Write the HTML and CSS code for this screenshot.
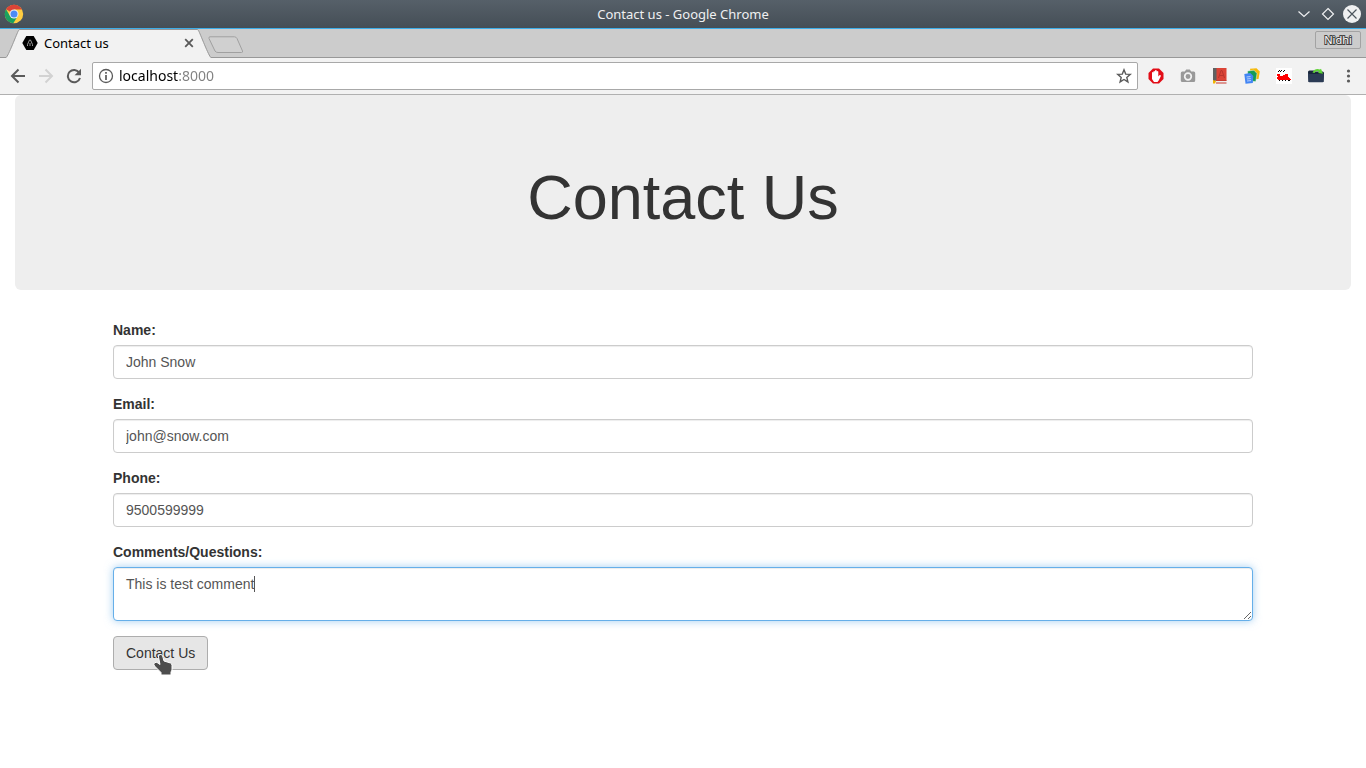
FILE: index.html
```html
<!DOCTYPE html>
<html lang="en">
<head>
<meta charset="utf-8">
<meta name="viewport" content="width=device-width, initial-scale=1">
<title>Contact us</title>
<link rel="stylesheet" href="styles.css">
</head>
<body>
<header class="titlebar">
  <svg class="app-icon" width="20" height="20" viewBox="0 0 20 20" aria-hidden="true">
    <circle cx="10" cy="10" r="9.2" fill="#ffcd41"/>
    <path d="M10 10 2 5.3A9.2 9.2 0 0 1 18 5.5H10Z" fill="#dc4437"/>
    <path d="M2 5.3A9.2 9.2 0 0 0 9.3 19.2L13.8 12 10 10 6.2 12.3Z" fill="#1aa15f"/>
    <circle cx="10" cy="10" r="4.5" fill="#f1f1f1"/>
    <circle cx="10" cy="10" r="3.5" fill="#4c8bf5"/>
  </svg>
  <span class="window-title">Contact us - Google Chrome</span>
  <div class="window-controls">
    <button class="window-button" type="button" aria-label="Minimize"><svg width="20" height="20" viewBox="0 0 20 20"><path d="m4.500 7.500 5.500 5 5.500-5" fill="none" stroke="#eff0f1" stroke-width="1.2"/></svg></button>
    <button class="window-button" type="button" aria-label="Maximize"><svg width="20" height="20" viewBox="0 0 20 20"><path d="m10 4.500 5.500 5.500-5.500 5.500L4.500 10Z" fill="none" stroke="#eff0f1" stroke-width="1.2"/></svg></button>
    <button class="window-button" type="button" aria-label="Close"><svg width="20" height="20" viewBox="0 0 20 20"><circle cx="10" cy="10" r="9" fill="#eff0f1"/><path d="m5.500 5.500 9 9m0-9-9 9" stroke="#4d565e" stroke-width="1.2"/></svg></button>
  </div>
</header>

<div class="tabstrip">
  <div class="tab">
    <svg class="tab-shape" width="206" height="29" viewBox="0 0 206 29" aria-hidden="true"><path d="M0 28.500C2 28 11 4 12.500 1.500Q13 .5 14 .5H191Q192 .5 192.500 1.500C194 4 203 28 205 28.500V29H0Z" fill="#f2f2f2"/><path d="M0 28.500C2 28 11 4 12.500 1.500Q13 .5 14 .5H191Q192 .5 192.500 1.500C194 4 203 28 205 28.500" fill="none" stroke="#989898"/></svg>
    <svg class="tab-icon" width="16" height="16" viewBox="0 0 16 16" aria-hidden="true"><path d="M4.300 1h7.400L15.700 8l-4 7H4.300L.3 8Z" fill="#000"/><path d="M5.500 11V9.500L7.500 5h1l2 4.500V11M8 8v3" fill="none" stroke="#999" stroke-width="1"/></svg>
    <span class="tab-title">Contact us</span>
    <button class="tab-close" type="button" aria-label="Close tab"><svg width="10" height="10" viewBox="0 0 10 10"><path d="m1.200 1.200 7.600 7.600m0-7.600L1.200 8.800" stroke="#5a5a5a" stroke-width="1.800"/></svg></button>
  </div>
  <button class="new-tab" type="button" aria-label="New tab"><svg width="36" height="18" viewBox="0 0 36 18"><path d="M2 .8h24.500Q28 .8 29 2.500L34.500 15Q35 16.500 33.500 16.500H10Q8 16.500 7 15L1 2.500Q.5.8 2 .8Z" fill="#d0d0d0" stroke="#a0a0a0"/></svg></button>
  <button class="profile" type="button">Nidhi</button>
</div>

<nav class="toolbar" aria-label="Browser">
  <button class="tool" type="button" aria-label="Back"><svg width="16" height="16" viewBox="0 0 16 16"><path d="M15 8H2.500M8.500 1.500 2 8l6.500 6.500" fill="none" stroke="#5a5a5a" stroke-width="2"/></svg></button>
  <button class="tool" type="button" aria-label="Forward" disabled><svg width="16" height="16" viewBox="0 0 16 16"><path d="M1 8h12.500M7.500 1.500 14 8l-6.500 6.500" fill="none" stroke="#d2d2d2" stroke-width="2"/></svg></button>
  <button class="tool" type="button" aria-label="Reload"><svg width="16" height="16" viewBox="0 0 16 16"><path d="M13.200 4.600A6.200 6.200 0 1 0 14 10" fill="none" stroke="#5a5a5a" stroke-width="2"/><path d="M15 .8v6.400H8.600Z" fill="#5a5a5a"/></svg></button>
  <div class="address">
    <svg width="16" height="16" viewBox="0 0 16 16" aria-hidden="true"><circle cx="8" cy="8" r="6.500" fill="none" stroke="#5a5a5a" stroke-width="1.300"/><path d="M8 7v5M8 4v1.700" stroke="#5a5a5a" stroke-width="1.700"/></svg>
    <input class="address-input" type="text" value="localhost:8000" aria-label="Address" spellcheck="false">
    <button class="star" type="button" aria-label="Bookmark this page"><svg width="16" height="16" viewBox="0 0 16 16"><path d="m8 1.800 1.700 4.300 4.600.3-3.500 3 1.100 4.500L8 11.500l-3.900 2.400 1.100-4.500-3.500-3 4.600-.3Z" fill="none" stroke="#5a5a5a" stroke-width="1.400"/></svg></button>
  </div>
  <div class="extensions">
    <button class="tool" type="button" aria-label="Ad blocker"><svg width="16" height="16" viewBox="0 0 16 16"><path d="M5 .5h6L15.500 5v6L11 15.500H5L.5 11V5Z" fill="#e20d17"/><path d="M4 4.500q.7-.8 1.400 0V3.500q.8-.9 1.600 0v-1q.9-.8 1.700 0v1q.8-.8 1.600 0V8.500l1.400-1.500q1.400 0 1.200.9L10.700 12.500 9.500 14H6L4 11Z" fill="#fff"/></svg></button>
    <button class="tool" type="button" aria-label="Screenshot"><svg width="16" height="16" viewBox="0 0 16 16"><path d="M2.300 3.500H4.800l1.400-2h3.600l1.400 2h2.500q1.500 0 1.500 1.500v7.500q0 1.500-1.500 1.500H2.300Q.8 14 .8 12.500V5q0-1.500 1.500-1.500Z" fill="#999"/><circle cx="8" cy="8.500" r="3.300" fill="none" stroke="#f2f2f2" stroke-width="1.700"/></svg></button>
    <button class="tool" type="button" aria-label="Dictionary"><svg width="16" height="16" viewBox="0 0 16 16"><path d="M1 0h13.500v12.500H1Z" fill="#db4437"/><path d="M1 0h3.500v12L1 14.500Z" fill="#616161"/><path d="M4 12.500h10v2H2Z" fill="#eee"/><path d="M4 15h10.500M4 12.500h10.500" stroke="#c83b30"/><path d="m6.500 10 2.500-7.500h1L12.500 10M7.500 7.500h4" fill="none" stroke="#b8342c"/><path d="m1 12 3 1-1 2.500H1Z" fill="#f4b400"/></svg></button>
    <button class="tool" type="button" aria-label="Copy documents"><svg width="16" height="16" viewBox="0 0 16 16"><path d="m6 .8 6.500-.6L15.800 3.500 14.500 11l-7 .5Z" fill="#f5b90a"/><path d="m3.500 3 6.500-.8L13 5.500 11.800 13.500l-7.300-.5Z" fill="#159b56" stroke="#f2f2f2" stroke-width=".5"/><path d="m.3 6 6-.9L9.300 8 8.800 15l-7.300.8Z" fill="#4285f4"/><path d="m2.500 9 4-.4M2.800 11l4-.4M3 13l4-.4" stroke="#b9d1fc"/></svg></button>
    <button class="tool" type="button" aria-label="Train"><svg width="16" height="16" viewBox="0 0 16 16" shape-rendering="crispEdges"><path d="M0 0h16v16H0Z" fill="#fff"/><path d="M1 6h3v2h3V7h2V6h3v3h1v1h1v1h1v1H2v-1H1V9h1V8H1Z" fill="red"/><path d="M3 2h1v1H3zm2 0h1v1H5zm3 0h1v1H8zM2 3h1v1H2zm2 0h1v1H4zm3 0h1v1H7zM3 12h1v1H3zm3 0h1v1H6zm3 0h1v1H9zm3 0h2v1h-2z" fill="#000"/></svg></button>
    <button class="tool" type="button" aria-label="Folder"><svg width="16" height="16" viewBox="0 0 16 16"><path d="M0 4q0-1.500 1.500-1.500H6l1 1h7.500q1.500 0 1.500 1.500L15.500 14H.5Z" fill="#18263c"/><path d="M0 6h16L15.500 13.500q0 .8-.8.8H1.300q-.8 0-.8-.8Z" fill="#2b3b55"/><path d="M4.500 4.500Q7-.2 12 1.500L13 .8l2 5-5-.8 1.200-1.500Q8 2 6.500 5Z" fill="#5fd336"/></svg></button>
    <button class="tool" type="button" aria-label="Menu"><svg width="16" height="16" viewBox="0 0 16 16" fill="#5a5a5a"><circle cx="8.500" cy="3" r="1.600"/><circle cx="8.500" cy="8" r="1.600"/><circle cx="8.500" cy="13" r="1.600"/></svg></button>
  </div>
</nav>

<main class="page">
  <div class="jumbotron"><h1 class="heading">Contact Us</h1></div>
  <form class="contact-form">
    <div class="form-group">
      <label class="label" for="name">Name:</label>
      <input class="control" id="name" type="text" value="John Snow">
    </div>
    <div class="form-group">
      <label class="label" for="email">Email:</label>
      <input class="control" id="email" type="email" value="john@snow.com">
    </div>
    <div class="form-group">
      <label class="label" for="phone">Phone:</label>
      <input class="control" id="phone" type="tel" value="9500599999">
    </div>
    <div class="form-group">
      <label class="label" for="comments">Comments/Questions:</label>
      <div class="comment-box">
        <textarea class="control control-active" id="comments" rows="2" spellcheck="false">This is test comment</textarea>
        <span class="caret"></span>
      </div>
    </div>
    <div class="actions">
      <button class="submit" type="button">Contact Us</button>
      <svg class="pointer" width="20" height="24" viewBox="0 0 20 24" aria-hidden="true"><path d="M6 2Q8 .5 9.500 2.500L11 8 17.500 10Q19 10.500 19 12.500V17L18 19V22H8V19.500L1.500 13Q0 11 1.500 9.800Q3.200 8.700 5 10L7 11.500L5.500 4Q5.300 2.800 6 2Z" fill="#4d4d4d" stroke="#fff"/></svg>
    </div>
  </form>
</main>
</body>
</html>
```
FILE: styles.css
```css
* { box-sizing: border-box; }
body {
  margin: 0;
  background: #fff;
  color: #333;
  font: 14px/20px "Liberation Sans", Arial, sans-serif;
}
button { margin: 0; padding: 0; border: 0; background: none; color: inherit; font: inherit; }
svg { display: block; flex: none; }

.titlebar {
  display: grid;
  grid-template-columns: 1fr auto 1fr;
  align-items: center;
  height: 29px;
  padding: 0 4px;
  border-bottom: 1px solid #3daee9;
  background: linear-gradient(#566069, #454e56);
  color: #eff0f1;
  font: 13px/20px "Noto Sans", sans-serif;
}
.window-controls { display: flex; justify-content: flex-end; gap: 4px; }

.tabstrip {
  display: flex;
  align-items: flex-start;
  height: 29px;
  padding: 0 5px 0 6px;
  background: #ccc;
  box-shadow: inset 0 -1px #989898;
}
.tab {
  position: relative;
  display: flex;
  align-items: center;
  width: 206px;
  height: 29px;
  padding: 0 18px 1px 16px;
  color: #000;
  font: 13px/20px "Noto Sans", sans-serif;
}
.tab-shape { position: absolute; top: 0; left: 0; }
.tab-icon, .tab-title, .tab-close { position: relative; }
.tab-title { flex: 1; margin-left: 6px; padding-bottom: 1px; }
.new-tab { margin: 7px 0 0 -4px; }
.profile {
  width: 46px;
  height: 18px;
  margin: 2px 0 0 auto;
  border: 1px solid #a3a3a3;
  border-radius: 2px;
  color: #fff;
  font: 11px/16px "Noto Sans", sans-serif;
  -webkit-text-stroke: 2px #444;
  paint-order: stroke fill;
}

.toolbar {
  display: flex;
  align-items: center;
  gap: 12px;
  height: 37px;
  padding: 0 10px;
  border-bottom: 1px solid #b0b0b0;
  background: #f2f2f2;
}
.address {
  display: flex;
  flex: 1;
  align-items: center;
  gap: 5px;
  height: 28px;
  margin-left: -2px;
  padding: 0 5px;
  border: 1px solid #a8a8a8;
  border-radius: 2px;
  background: #fff;
}
.address-input {
  flex: 1;
  min-width: 0;
  padding: 0;
  border: 0;
  outline: 0;
  background: linear-gradient(90deg, #000 60px, #808080 60px);
  background-clip: text;
  color: transparent;
  font: 14px/20px "Noto Sans", sans-serif;
}
.extensions { display: flex; gap: 16px; margin-left: -2px; }

.page { padding: 0 15px 30px; }
.jumbotron {
  margin-bottom: 30px;
  padding: 48px 60px;
  border-radius: 6px;
  background: #eee;
  text-align: center;
}
.heading { margin: 20px 0 10px; font-size: 63px; font-weight: 500; line-height: 69px; }
.contact-form { max-width: 1140px; margin: 0 auto; }
.form-group { margin-bottom: 15px; }
.label { display: block; margin-bottom: 5px; font-weight: 700; }
.control {
  display: block;
  width: 100%;
  height: 34px;
  padding: 6px 12px;
  border: 1px solid #ccc;
  border-radius: 4px;
  outline: 0;
  background: #fff;
  box-shadow: inset 0 1px 1px rgba(0, 0, 0, 0.075);
  color: #555;
  font: inherit;
}
.control-active {
  height: 54px;
  border-color: #66afe9;
  box-shadow: inset 0 1px 1px rgba(0, 0, 0, 0.075), 0 0 8px rgba(102, 175, 233, 0.6);
  resize: vertical;
}
.comment-box { position: relative; }
.caret { position: absolute; top: 9px; left: 141px; width: 1px; height: 16px; background: #555; }
.actions { position: relative; }
.submit {
  display: block;
  padding: 6px 12px;
  border: 1px solid #adadad;
  border-radius: 4px;
  background: #e6e6e6;
}
.pointer { position: absolute; top: 17px; left: 40px; }
```
